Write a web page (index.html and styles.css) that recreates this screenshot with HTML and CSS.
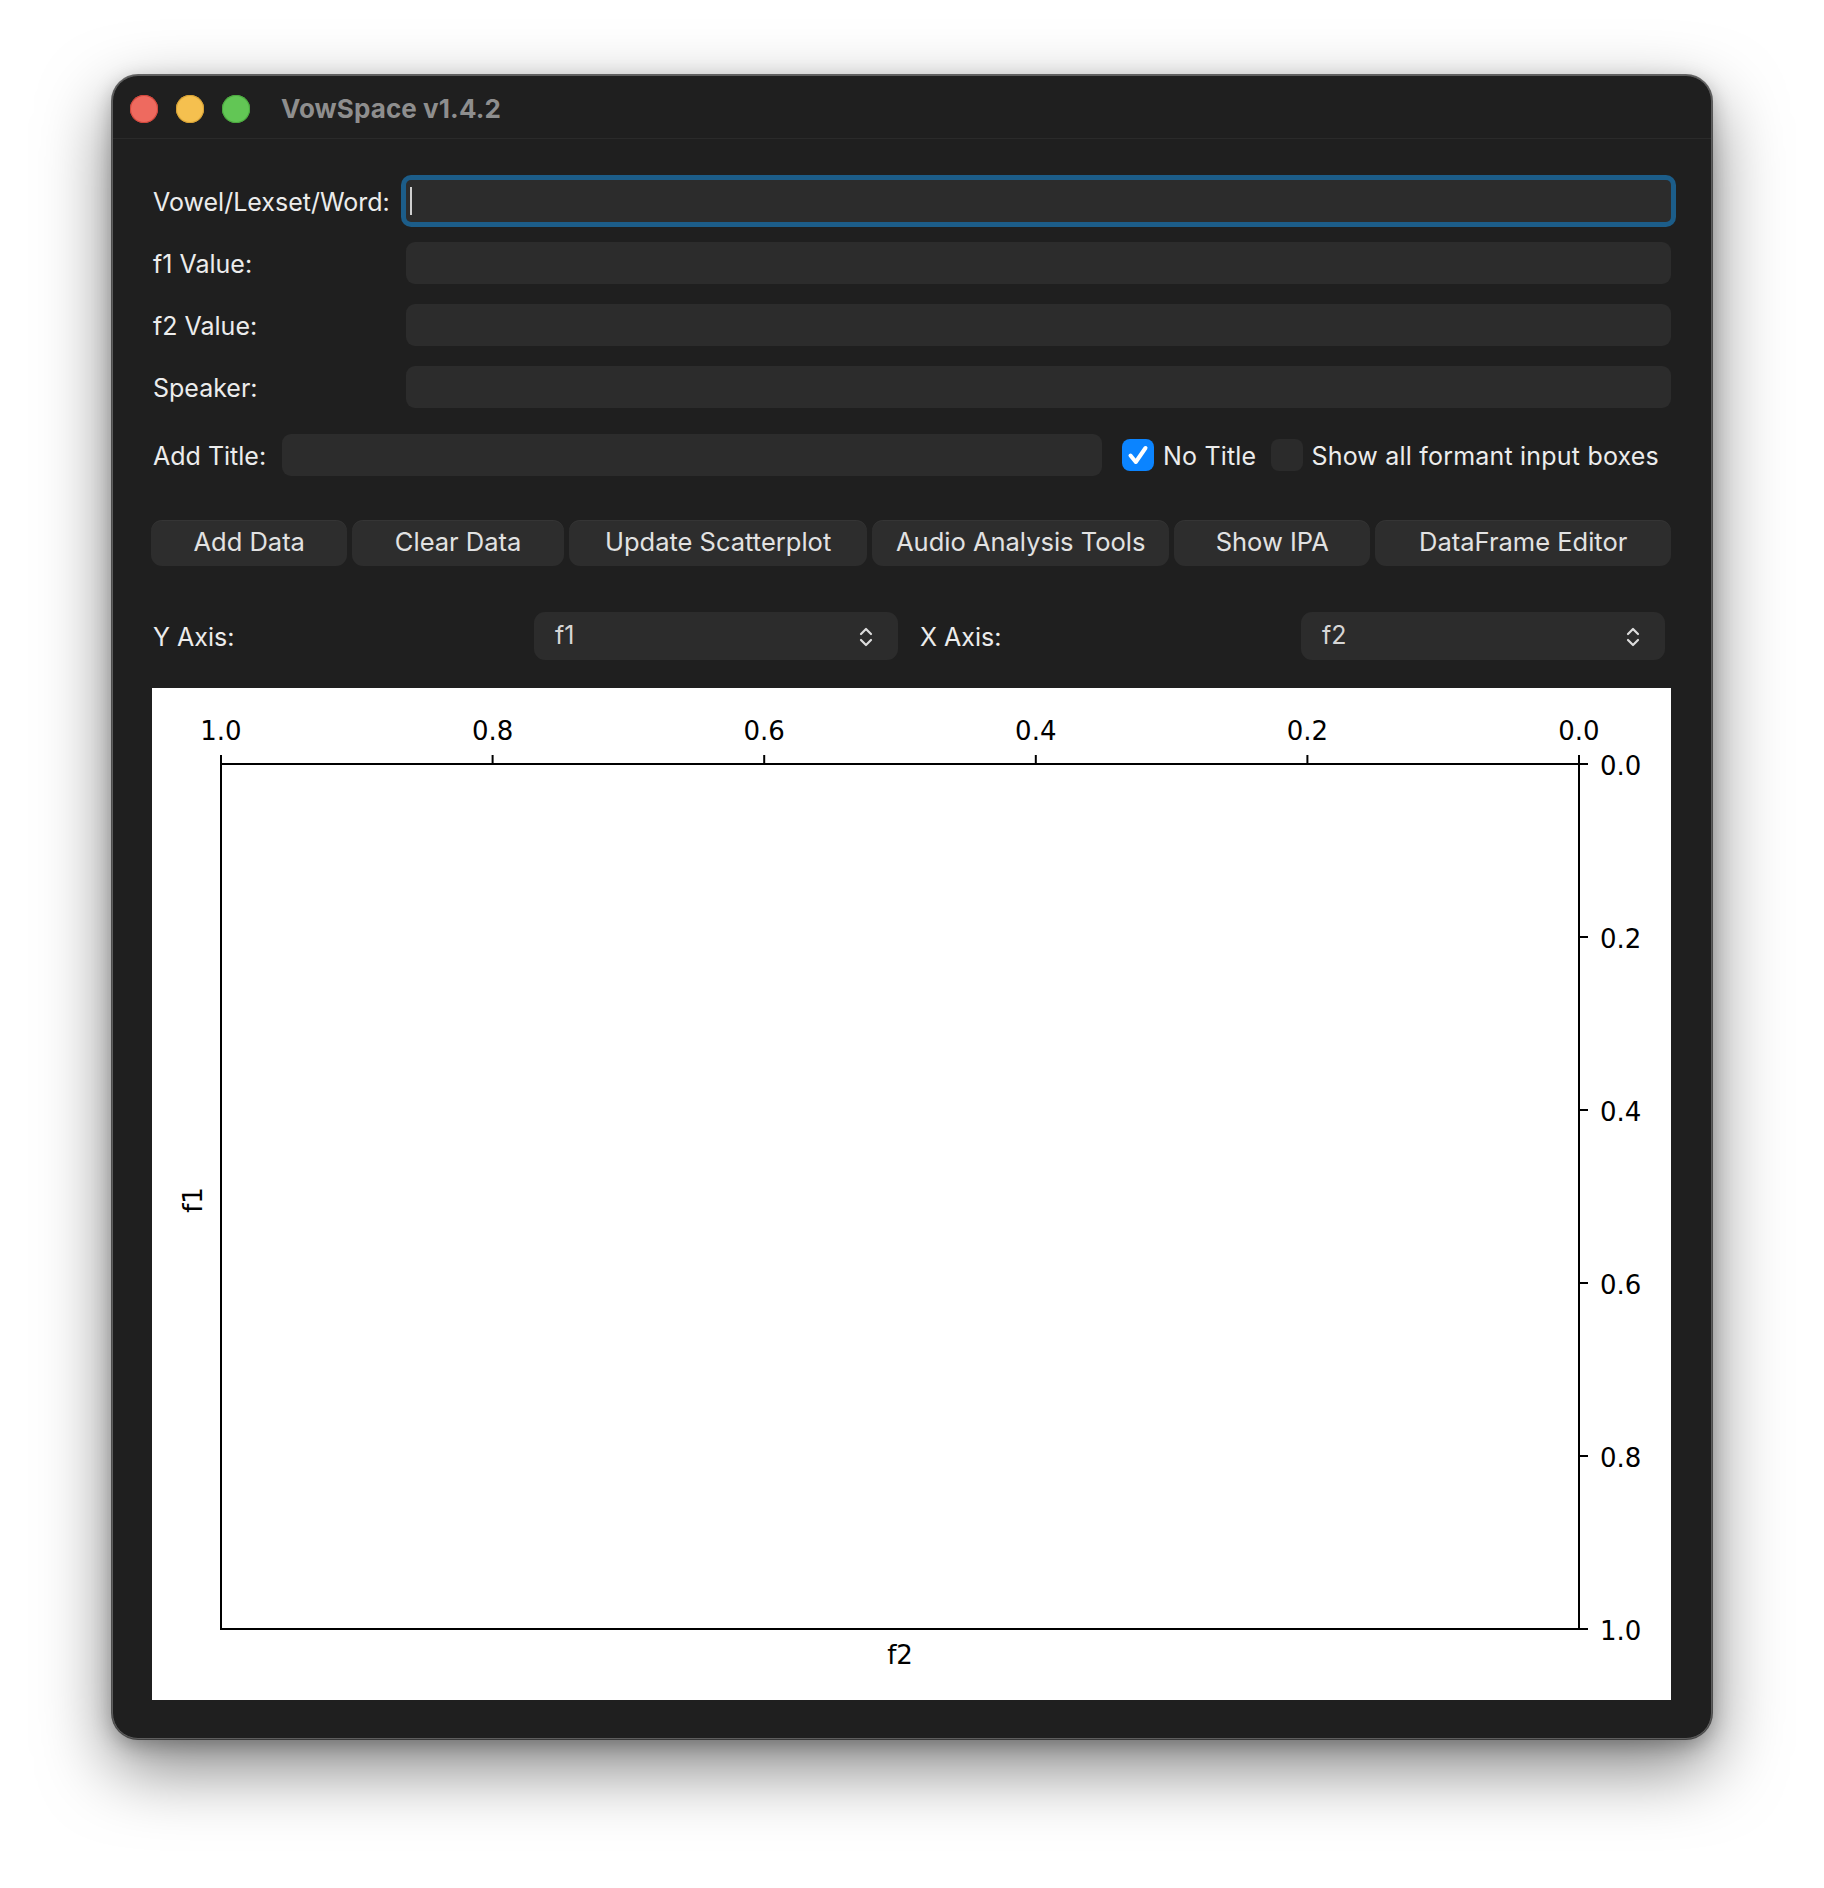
FILE: index.html
```html
<!DOCTYPE html>
<html lang="en">
<head>
<meta charset="utf-8">
<title>VowSpace v1.4.2</title>
<link rel="stylesheet" href="styles.css">
</head>
<body>
<div class="stage">
  <div class="window">
    <div class="titlebar">
      <div class="lights">
        <span class="light red"></span>
        <span class="light yellow"></span>
        <span class="light green"></span>
      </div>
      <div class="title">VowSpace v1.4.2</div>
    </div>
    <div class="content">
      <div class="form">
        <label class="lbl">Vowel/Lexset/Word:</label>
        <div class="field focused"><span class="caret"></span></div>
        <label class="lbl">f1 Value:</label>
        <div class="field"></div>
        <label class="lbl">f2 Value:</label>
        <div class="field"></div>
        <label class="lbl">Speaker:</label>
        <div class="field"></div>
      </div>

      <div class="title-row">
        <label class="lbl">Add Title:</label>
        <div class="field grow"></div>
        <span class="check on">
          <svg viewBox="0 0 32 32" width="32" height="32"><path d="M8.5 16.5 L13.8 23 L23.5 9" fill="none" stroke="#fff" stroke-width="4" stroke-linecap="round" stroke-linejoin="round"/></svg>
        </span>
        <span class="check-lbl">No Title</span>
        <span class="check off"></span>
        <span class="check-lbl">Show all formant input boxes</span>
      </div>

      <div class="buttons">
        <button class="btn">Add Data</button>
        <button class="btn">Clear Data</button>
        <button class="btn">Update Scatterplot</button>
        <button class="btn">Audio Analysis Tools</button>
        <button class="btn">Show IPA</button>
        <button class="btn">DataFrame Editor</button>
      </div>

      <div class="axes-row">
        <div class="axis-half">
          <span class="lbl">Y Axis:</span>
          <div class="combo"><span>f1</span>
            <svg class="chev" viewBox="0 0 16 24" width="16" height="24"><path d="M3 9 L8 4 L13 9 M3 15 L8 20 L13 15" fill="none" stroke="#dcdcdc" stroke-width="2.2" stroke-linecap="round" stroke-linejoin="round"/></svg>
          </div>
        </div>
        <div class="axis-half">
          <span class="lbl">X Axis:</span>
          <div class="combo"><span>f2</span>
            <svg class="chev" viewBox="0 0 16 24" width="16" height="24"><path d="M3 9 L8 4 L13 9 M3 15 L8 20 L13 15" fill="none" stroke="#dcdcdc" stroke-width="2.2" stroke-linecap="round" stroke-linejoin="round"/></svg>
          </div>
        </div>
      </div>

      <div class="plot">
        <svg class="chart" viewBox="0 0 1519 1012" width="1519" height="1012">
          <g stroke="#000" stroke-width="2" fill="none">
            <rect x="69" y="76" width="1358" height="865"/>
            <line x1="69" y1="76" x2="69" y2="67"/>
            <line x1="340.6" y1="76" x2="340.6" y2="67"/>
            <line x1="612.2" y1="76" x2="612.2" y2="67"/>
            <line x1="883.8" y1="76" x2="883.8" y2="67"/>
            <line x1="1155.4" y1="76" x2="1155.4" y2="67"/>
            <line x1="1427" y1="76" x2="1427" y2="67"/>
            <line x1="1427" y1="76" x2="1436" y2="76"/>
            <line x1="1427" y1="249" x2="1436" y2="249"/>
            <line x1="1427" y1="422" x2="1436" y2="422"/>
            <line x1="1427" y1="595" x2="1436" y2="595"/>
            <line x1="1427" y1="768" x2="1436" y2="768"/>
            <line x1="1427" y1="941" x2="1436" y2="941"/>
          </g>
          <g class="tick" text-anchor="middle">
            <text x="69" y="52">1.0</text>
            <text x="340.6" y="52">0.8</text>
            <text x="612.2" y="52">0.6</text>
            <text x="883.8" y="52">0.4</text>
            <text x="1155.4" y="52">0.2</text>
            <text x="1427" y="52">0.0</text>
          </g>
          <g class="tick">
            <text x="1448" y="87">0.0</text>
            <text x="1448" y="260">0.2</text>
            <text x="1448" y="433">0.4</text>
            <text x="1448" y="606">0.6</text>
            <text x="1448" y="779">0.8</text>
            <text x="1448" y="952">1.0</text>
          </g>
          <text class="tick" x="748" y="976" text-anchor="middle">f2</text>
          <text class="tick" x="0" y="0" text-anchor="middle" transform="translate(50 512) rotate(-90)">f1</text>
        </svg>
      </div>
    </div>
  </div>
</div>
</body>
</html>
```
FILE: styles.css
```css
* { box-sizing: border-box; }
html, body { margin: 0; padding: 0; background: #ffffff; }
body {
  font-family: "Inter", "Liberation Sans", sans-serif;
  width: 1824px;
  height: 1888px;
  overflow: hidden;
}
.stage {
  padding: 75px 0 0 112px;
}
.window {
  width: 1600px;
  height: 1664px;
  background: #1f1f1f;
  border: 1px solid #5e5e5e;
  border-radius: 26px;
  box-shadow: 0 0 0 1px rgba(0,0,0,0.55), 0 28px 70px rgba(0,0,0,0.5), 0 6px 20px rgba(0,0,0,0.25);
  overflow: hidden;
  display: flex;
  flex-direction: column;
}
.titlebar {
  height: 63px;
  flex: none;
  display: flex;
  align-items: center;
  border-bottom: 1px solid #2a2a2a;
  padding-left: 17px;
  padding-top: 3px;
}
.lights { display: flex; gap: 18px; }
.light {
  width: 28px; height: 28px; border-radius: 50%;
  display: block;
}
.red { background: #ee6a5f; box-shadow: inset 0 0 0 1px #d2463b; }
.yellow { background: #f5c04f; box-shadow: inset 0 0 0 1px #d6a033; }
.green { background: #62c655; box-shadow: inset 0 0 0 1px #4aa83e; }
.title {
  margin-left: 31px;
  color: #8e8e8e;
  font-weight: 700;
  font-size: 26px;
  letter-spacing: 0.1px;
}
.content {
  padding: 41px 40px 0 39px;
  flex: 1;
  display: flex;
  flex-direction: column;
}
.lbl {
  color: #ececec;
  font-size: 25px;
  padding-left: 1px;
  padding-top: 2px;
  white-space: nowrap;
}
.form {
  display: grid;
  grid-template-columns: 254px 1fr;
  row-gap: 20px;
  align-items: center;
}
.field {
  height: 42px;
  background: #2c2c2c;
  border-radius: 9px;
  position: relative;
}
.field.focused {
  box-shadow: 0 0 0 5px #1c5d89;
  border-radius: 5px;
}
.caret {
  position: absolute;
  left: 4px;
  top: 7px;
  width: 2px;
  height: 28px;
  background: #cfcfcf;
}
.title-row {
  margin-top: 26px;
  display: flex;
  align-items: center;
}
.title-row .lbl { margin-right: 16px; }
.field.grow { flex: 1; }
.check {
  width: 32px; height: 32px; border-radius: 8px;
  flex: none;
  display: block;
}
.check.on { background: #0b84ff; margin-left: 20px; }
.check.on svg { display: block; }
.check.off { background: #2b2b2b; margin-left: 15px; }
.check-lbl {
  color: #ececec;
  font-size: 25px;
  margin-left: 9px;
  padding-top: 2px;
  letter-spacing: 0.2px;
  white-space: nowrap;
}
.check-lbl:last-child { margin-right: 12px; margin-left: 8px; }
.buttons {
  margin-top: 44px;
  display: grid;
  grid-template-columns: 196fr 211fr 298fr 296fr 196fr 295fr;
  column-gap: 5px;
  margin-left: -1px;
}
.btn {
  height: 46px;
  border: none;
  background: #2d2d2d;
  border-radius: 11px;
  color: #e2e2e2;
  font-family: "Inter", "Liberation Sans", sans-serif;
  font-size: 25.5px;
  padding: 0 0 4px 0;
  box-shadow: inset 0 1px 0 rgba(255,255,255,0.04);
}
.axes-row {
  margin-top: 46px;
  display: grid;
  grid-template-columns: 1fr 1fr;
  column-gap: 21px;
  padding-right: 6px;
}
.axis-half {
  display: flex;
  align-items: center;
}
.axis-half .lbl { flex: 1; }
.combo {
  width: 364px;
  height: 48px;
  background: #2c2c2c;
  border-radius: 11px;
  display: flex;
  align-items: center;
  justify-content: space-between;
  padding: 0 24px 2px 21px;
  color: #d6d6d6;
  font-size: 25px;
}
.chev { display: block; margin-top: 4px; }
.plot {
  margin-top: 28px;
  width: 1519px;
  height: 1012px;
  background: #ffffff;
}
.chart { display: block; }
.tick {
  font-family: "DejaVu Sans", sans-serif;
  font-size: 26px;
  fill: #000;
}
```
